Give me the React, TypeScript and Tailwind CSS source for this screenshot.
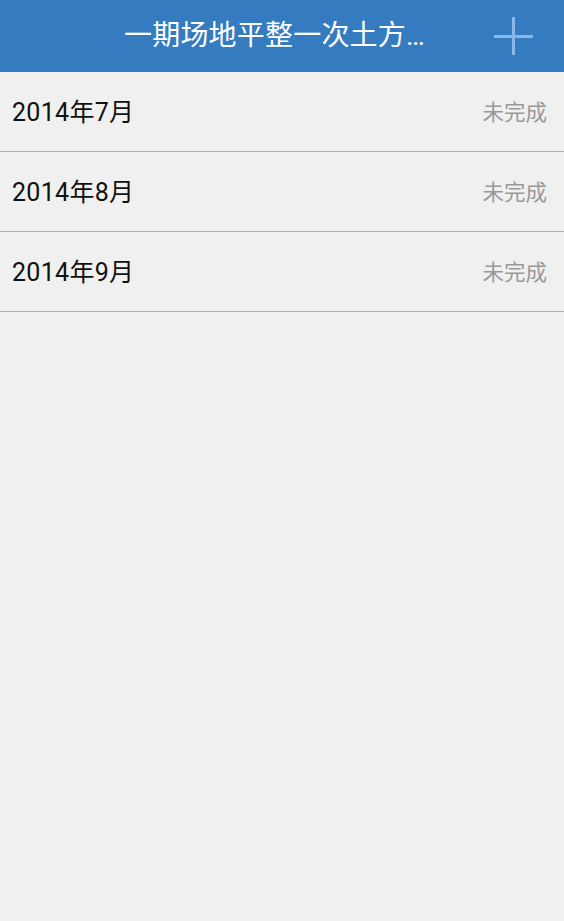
import React from "react";

const rows = ["2014年7月", "2014年8月", "2014年9月"];

export default function App() {
  return (
    <div
      className="w-[564px] h-[921px] bg-[#f0f0f0] flex flex-col"
      style={{ fontFamily: 'Roboto, "Noto Sans CJK SC", sans-serif' }}
    >
      <div className="h-[72px] bg-[#357bbf] flex items-center pl-[124px] pr-[31px] shrink-0">
        <div className="text-white text-[28px] leading-none whitespace-nowrap tracking-[0.2px]">
          一期场地平整一次土方…
        </div>
        <div className="ml-auto w-[39px] h-[38px] relative">
          <div className="absolute left-[18px] top-0 w-[3px] h-[38px] bg-[#8ab7e6]" />
          <div className="absolute left-0 top-[18px] w-[39px] h-[3px] bg-[#8ab7e6]" />
        </div>
      </div>
      {rows.map((r) => (
        <div
          key={r}
          className="h-[80px] border-b border-[#b0b0b0] flex items-center pl-[12px] pr-[17px] shrink-0"
        >
          <span className="text-[25px] text-[#111] leading-none pt-[2px] tracking-[0.3px]">{r}</span>
          <span className="ml-auto text-[21.5px] text-[#999999] leading-none pt-[2px]">未完成</span>
        </div>
      ))}
    </div>
  );
}
